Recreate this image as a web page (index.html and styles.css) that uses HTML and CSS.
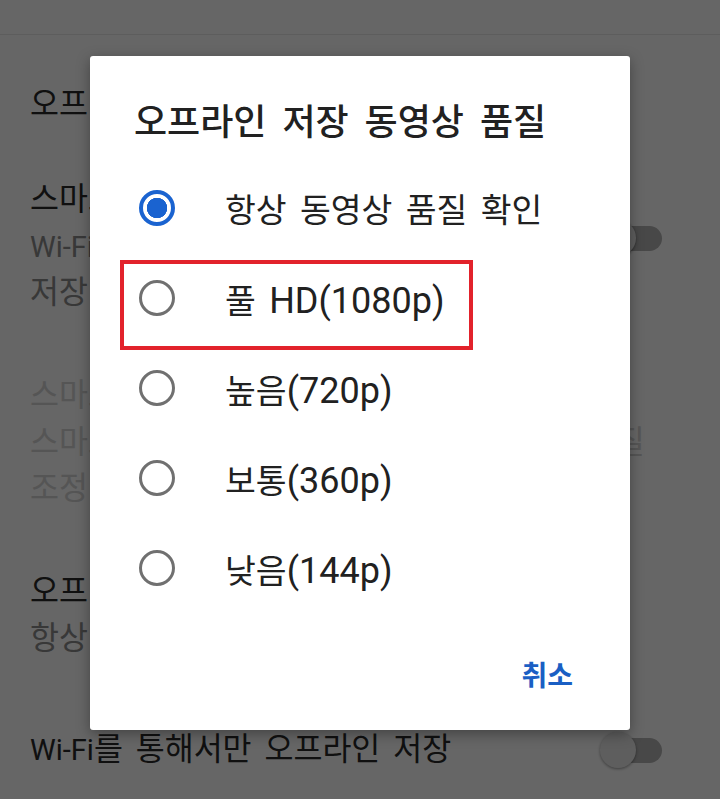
FILE: index.html
```html
<!DOCTYPE html>
<html lang="ko">
<head>
<meta charset="utf-8" />
<title>오프라인 저장 동영상 품질</title>
<link rel="stylesheet" href="styles.css">
</head>

<body>
<div class="screen">
    <!-- Liste des réglages (sous le voile) -->
    <div class="settings">
        <div class="prev"></div>
        <div class="header">오프라인 저장</div>

        <div class="item item-top">
            <div class="item-text">
                <div class="item-title">스마트 오프라인 저장</div>
                <div class="item-sub"><span class="en">Wi-Fi</span>에 연결되면 추천 동영상<br>저장</div>
            </div>
            <span class="switch"></span>
        </div>

        <div class="item disabled">
            <div class="item-text">
                <div class="item-title">스마트 오프라인 저장 품질</div>
                <div class="item-sub">스마트 오프라인 저장 동영상 자동으로 고품질<br>조정</div>
            </div>
        </div>

        <div class="item">
            <div class="item-text">
                <div class="item-title">오프라인 저장 동영상 품질</div>
                <div class="item-sub">항상 동영상 품질 확인</div>
            </div>
        </div>

        <div class="item item-last">
            <div class="item-text">
                <div class="item-title"><span class="en">Wi-Fi</span>를 통해서만 오프라인 저장</div>
            </div>
            <span class="switch"></span>
        </div>
    </div>

    <div class="scrim"></div>

    <!-- Boîte de dialogue -->
    <div class="dialog">
        <div class="dialog-title">오프라인 저장 동영상 품질</div>
        <div class="options">
            <div class="option">
                <span class="radio checked"></span>
                <span class="label">항상 동영상 품질 확인</span>
            </div>
            <div class="option">
                <span class="radio"></span>
                <span class="label">풀 <span class="num">HD(1080p)</span></span>
            </div>
            <div class="option">
                <span class="radio"></span>
                <span class="label">높음<span class="num">(720p)</span></span>
            </div>
            <div class="option">
                <span class="radio"></span>
                <span class="label">보통<span class="num">(360p)</span></span>
            </div>
            <div class="option">
                <span class="radio"></span>
                <span class="label">낮음<span class="num">(144p)</span></span>
            </div>
        </div>
        <div class="dialog-actions">
            <span class="btn">취소</span>
        </div>
        <div class="highlight"></div>
    </div>
</div>
</body>
</html>
```

FILE: styles.css
```css
body {
    margin: 0;
    padding: 0;
    font-family: Roboto, "Noto Sans CJK KR", sans-serif;
    overflow: hidden;
}

.screen {
    position: relative;
    width: 720px;
    height: 799px;
    background: white;
    overflow: hidden;
}

/* ---- réglages ---- */
.settings {
    font-size: 31.5px;
    word-spacing: 3px;
    color: #2a2a2a;
}

.settings .en {
    font-size: 29px;
}

.prev {
    height: 34px;
    border-bottom: 1px solid #e9e9e9;
}

.header {
    margin-top: 50px;
    padding-left: 30px;
    line-height: 40px;
    margin-bottom: 25px;
}

.item {
    display: flex;
    align-items: center;
    padding: 30px 58px 30px 30px;
}

.item-top {
    align-items: flex-start;
}

.item-top .switch {
    margin-top: 40px;
}

.item-text {
    flex: 1;
    white-space: nowrap;
}

.item-title {
    line-height: 40px;
}

.item-sub {
    margin-top: 4px;
    line-height: 46px;
    color: #8c8c8c;
}

.disabled .item-title,
.disabled .item-sub {
    color: #d4d4d4;
}

.disabled .item-sub {
    word-spacing: 5px;
}

.item-last {
    padding-top: 38px;
}

.item-last .item-title {
    word-spacing: 5px;
}

.switch {
    position: relative;
    flex: none;
    width: 62px;
    height: 36px;
}

.switch::before {
    content: "";
    position: absolute;
    left: 4px;
    right: 0;
    top: 6px;
    height: 25px;
    border-radius: 13px;
    background: #b3b3b3;
}

.switch::after {
    content: "";
    position: absolute;
    left: 0;
    top: 0;
    width: 36px;
    height: 36px;
    border-radius: 50%;
    background: #ececec;
    box-shadow: 0 1px 3px rgba(0, 0, 0, 0.4);
}

.scrim {
    position: absolute;
    inset: 0;
    background: rgba(0, 0, 0, 0.6);
}

/* ---- dialogue ---- */
.dialog {
    position: absolute;
    left: 90px;
    top: 56px;
    width: 540px;
    height: 674px;
    box-sizing: border-box;
    padding: 47px 0 35px 0;
    background: white;
    border-radius: 3px;
    box-shadow: 0 4px 14px rgba(0, 0, 0, 0.35);
    color: #212121;
}

.dialog-title {
    margin-left: 44px;
    font-size: 36px;
    font-weight: 500;
    line-height: 40px;
    word-spacing: 7px;
}

.options {
    margin-top: 20px;
    padding-left: 49px;
}

.option {
    display: flex;
    align-items: center;
    height: 90px;
}

.radio {
    flex: none;
    box-sizing: border-box;
    width: 36px;
    height: 36px;
    border-radius: 50%;
    border: 3.5px solid #707070;
}

.radio.checked {
    border: 4px solid #1a63d0;
    background: radial-gradient(circle, #1a63d0 10px, transparent 10.5px);
}

.label {
    margin-left: 50px;
    font-size: 33.5px;
    line-height: 40px;
    word-spacing: 5px;
    padding-top: 6px;
}

.num {
    font-size: 36px;
    word-spacing: 0;
}

.dialog-actions {
    margin-top: 46px;
    padding-right: 57px;
    text-align: right;
}

.btn {
    font-size: 28px;
    font-weight: 700;
    line-height: 36px;
    color: #1a5fc4;
}

.highlight {
    position: absolute;
    left: 30px;
    top: 204px;
    width: 353px;
    height: 90px;
    box-sizing: border-box;
    border: 4px solid #e2222b;
}
```
